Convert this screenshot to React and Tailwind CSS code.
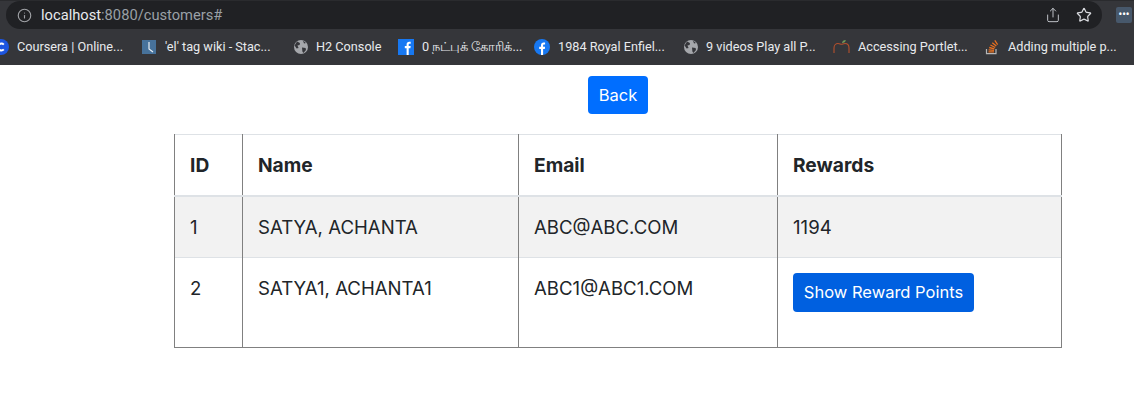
import { Info, Star, Share } from 'lucide-react';

function Globe() {
  return (
    <svg width="16" height="16" viewBox="0 0 16 16" className="shrink-0">
      <circle cx="8" cy="8" r="7" fill="#a5a7ab" />
      <path d="M4 2.6 7 4 6.6 6 4.4 6.6 5.6 9 3.6 9.4 1.6 6.4ZM9 8.4l3.6.6.4 2-2.6 3-1-1.6ZM10 1.6l3 2.4-2 .6Z" fill="#35363a" />
    </svg>
  );
}

function FbSquare() {
  return (
    <svg width="16" height="16" viewBox="0 0 16 16" className="shrink-0">
      <rect width="16" height="16" fill="#1778f2" />
      <path d="M8.6 16V9.2H6.8V7h1.800V5.400C8.600 3.600 9.700 2.700 11.200 2.700h1.500v2.100h-1c-.8 0-1 .4-1 1V7h2l-.3 2.200h-1.700V16Z" fill="#fff" />
    </svg>
  );
}

function FbRound() {
  return (
    <svg width="16" height="16" viewBox="0 0 16 16" className="shrink-0">
      <circle cx="8" cy="8" r="8" fill="#1778f2" />
      <path d="M7 16V10H5.200V7.800H7V6.200C7 4.400 8.100 3.500 9.600 3.500h1.500v2h-1c-.8 0-1 .4-1 1v1.300h2l-.3 2.200H9.100V16Z" fill="#fff" />
    </svg>
  );
}

// logo sits half off the left edge of the window, as in the bookmarks bar
function Coursera() {
  return (
    <svg width="9" height="16" viewBox="7 0 9 16" className="shrink-0">
      <circle cx="8" cy="8" r="8" fill="#1d55e0" />
      <path d="M10.800 5.600A3.400 3.400 0 1 0 10.800 10.400" stroke="#fff" strokeWidth="2" fill="none" />
    </svg>
  );
}

function ClockTag() {
  return (
    <svg width="14" height="14" viewBox="0 0 14 14" className="shrink-0">
      <rect width="14" height="14" fill="#47729b" />
      <path d="M7 2v7l4 3" stroke="#e8eef4" strokeWidth="1.200" fill="none" />
    </svg>
  );
}

function Apple() {
  return (
    <svg width="17" height="16" viewBox="0 0 17 16" className="shrink-0">
      <path d="M1 14V9c0-3 2-4.500 4-4.500 1.500 0 2.500.7 3.500.7s2-.7 3.500-.7c2 0 4 1.500 4 4.500v5" stroke="#b5502c" strokeWidth="1.100" fill="none" />
      <path d="M9 4c.2-1.800 1.500-3 3.800-3-.2 2-1.500 3-3.800 3Z" fill="#6f9a5b" />
    </svg>
  );
}

function StackOverflow() {
  return (
    <svg width="14" height="16" viewBox="0 0 14 16" className="shrink-0">
      <path d="M1.500 10v4.700h9.500V10" stroke="#b7b7b7" strokeWidth="1.200" fill="none" />
      <path d="M3.500 12.800h5.500M3.600 10.800l5.400.6M4.200 8.500l5.200 1.400M5.400 6l4.800 2.500M7.300 3.700l4 3.400M9.800 1.400l2.800 4.300" stroke="#e8701f" strokeWidth="1.300" fill="none" />
    </svg>
  );
}

const bookmarks = [
  { icon: <Coursera />, label: 'Coursera | Online...', gap: 'gap-[8px]', width: 'w-[142px]' },
  { icon: <ClockTag />, label: "'el' tag wiki - Stac...", gap: 'gap-[9px]', width: 'w-[151px]' },
  { icon: <Globe />, label: 'H2 Console', gap: 'gap-[7px]', width: 'w-[105px]' },
  { icon: <FbSquare />, label: '0 நட்புக் கோரிக்...', gap: 'gap-[8px]', width: 'w-[136px]' },
  { icon: <FbRound />, label: '1984 Royal Enfiel...', gap: 'gap-[8px]', width: 'w-[149px]' },
  { icon: <Globe />, label: '9 videos Play all P...', gap: 'gap-[7px]', width: 'w-[150px]' },
  { icon: <Apple />, label: 'Accessing Portlet...', gap: 'gap-[8px]', width: 'w-[152px]' },
  { icon: <StackOverflow />, label: 'Adding multiple p...', gap: 'gap-[9px]', width: 'w-[130px]' },
];

export default function App() {
  return (
    <div className="w-[1134px] h-[417px] bg-white overflow-hidden font-['Inter',sans-serif] text-[#212529]">
      {/* browser chrome */}
      <div className="h-[65px] bg-[#35363a] font-['Roboto',sans-serif]">
        <div className="h-[29px] flex items-center pl-[6px] border-t border-[#2a2b2e]">
          <div className="w-[1096px] h-[28px] rounded-full bg-[#202124] flex items-center pl-[11px] pr-[10px]">
            <Info size={15} color="#a0a2a6" strokeWidth={1.800} />
            <span className="ml-[9px] text-[14.700px] text-[#e8eaed]">localhost</span>
            <span className="text-[14.700px] text-[#9aa0a6]">:8080/customers#</span>
            <div className="ml-auto flex items-center gap-[15px]">
              <Share size={16} color="#bdc1c6" strokeWidth={1.500} />
              <Star size={16} color="#dadce0" strokeWidth={1.800} />
            </div>
          </div>
          <div className="ml-[14px] w-4 h-4 rounded-[2px] bg-[#47586b] flex items-center justify-center text-white text-[10px] font-bold leading-none">
            •••
          </div>
        </div>
        <div className="h-[36px] flex items-center">
          {bookmarks.map((b) => (
            <div key={b.label} className={`flex items-center shrink-0 ${b.gap} ${b.width}`}>
              {b.icon}
              <span className="text-[12.700px] text-[#e8eaed] whitespace-nowrap font-['Roboto','Noto_Sans',sans-serif]">{b.label}</span>
            </div>
          ))}
        </div>
      </div>

      {/* page */}
      <div className="flex justify-center pt-[11px] pl-[102px]">
        <button className="h-[38px] w-[60px] rounded-[4px] bg-[#006eff] text-white text-[16.500px]">Back</button>
      </div>

      <div className="pt-[20px] pl-[174px]">
        <table className="w-[888px] table-fixed border-collapse text-[18.600px] leading-[27px]">
          <thead>
            <tr className="h-[61px] border-b-2 border-[#dee2e6] border-t border-t-[#dee2e6] text-[19.200px]">
              <th className="w-[68px] px-[15px] pt-[2px] text-left font-bold border-x border-x-[#808080]">ID</th>
              <th className="w-[276px] px-[15px] pt-[2px] text-left font-bold border-x border-x-[#808080]">Name</th>
              <th className="w-[259px] px-[15px] pt-[2px] text-left font-bold border-x border-x-[#808080]">Email</th>
              <th className="px-[15px] pt-[2px] text-left font-bold border-x border-x-[#808080]">Rewards</th>
            </tr>
          </thead>
          <tbody>
            <tr className="h-[62px] bg-[#f2f2f2] border-b border-[#dee2e6]">
              <td className="px-[15px] pt-[2px] border-x border-x-[#808080]">1</td>
              <td className="px-[15px] pt-[2px] border-x border-x-[#808080]">SATYA, ACHANTA</td>
              <td className="px-[15px] pt-[2px] border-x border-x-[#808080]">ABC@ABC.COM</td>
              <td className="px-[15px] pt-[2px] border-x border-x-[#808080]">1194</td>
            </tr>
            <tr className="h-[90px] border-b border-[#808080]">
              <td className="px-[15px] pt-[17px] align-top border-x border-x-[#808080]">2</td>
              <td className="px-[15px] pt-[17px] align-top border-x border-x-[#808080]">SATYA1, ACHANTA1</td>
              <td className="px-[15px] pt-[17px] align-top border-x border-x-[#808080]">ABC1@ABC1.COM</td>
              <td className="px-[15px] pt-[15px] align-top border-x border-x-[#808080]">
                <button className="block h-[39px] w-[181px] rounded-[4px] bg-[#0060e0] text-white text-[16.500px] leading-none">
                  Show Reward Points
                </button>
              </td>
            </tr>
          </tbody>
        </table>
      </div>
    </div>
  );
}
